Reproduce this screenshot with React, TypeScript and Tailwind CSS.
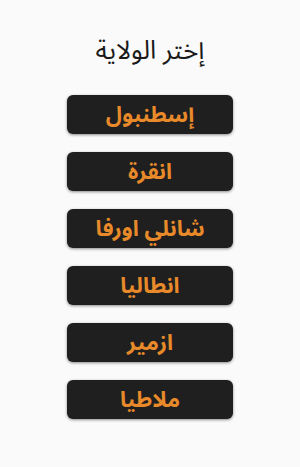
const cities = ["إسطنبول", "انقرة", "شانلي اورفا", "انطاليا", "ازمير", "ملاطيا"];

export default function App() {
  return (
    <div
      dir="rtl"
      className="w-[300px] h-[467px] bg-[#fafafa] flex flex-col items-center"
      style={{ fontFamily: '"Noto Sans Arabic", "Noto Naskh Arabic", "DejaVu Sans", sans-serif' }}
    >
      <h1 className="mt-[33px] text-[26px] leading-[36px] text-[#1a1a1a] font-normal">إختر الولاية</h1>
      <div className="mt-[26px] flex flex-col gap-[18px]">
        {cities.map((city) => (
          <button
            key={city}
            className="w-[166px] h-[39px] rounded-[6px] bg-[#1f1f1f] shadow-[0_1px_3px_rgba(0,0,0,0.45)] text-[#e88a2a] text-[22px] font-bold leading-none flex items-center justify-center"
          >
            {city}
          </button>
        ))}
      </div>
    </div>
  );
}
